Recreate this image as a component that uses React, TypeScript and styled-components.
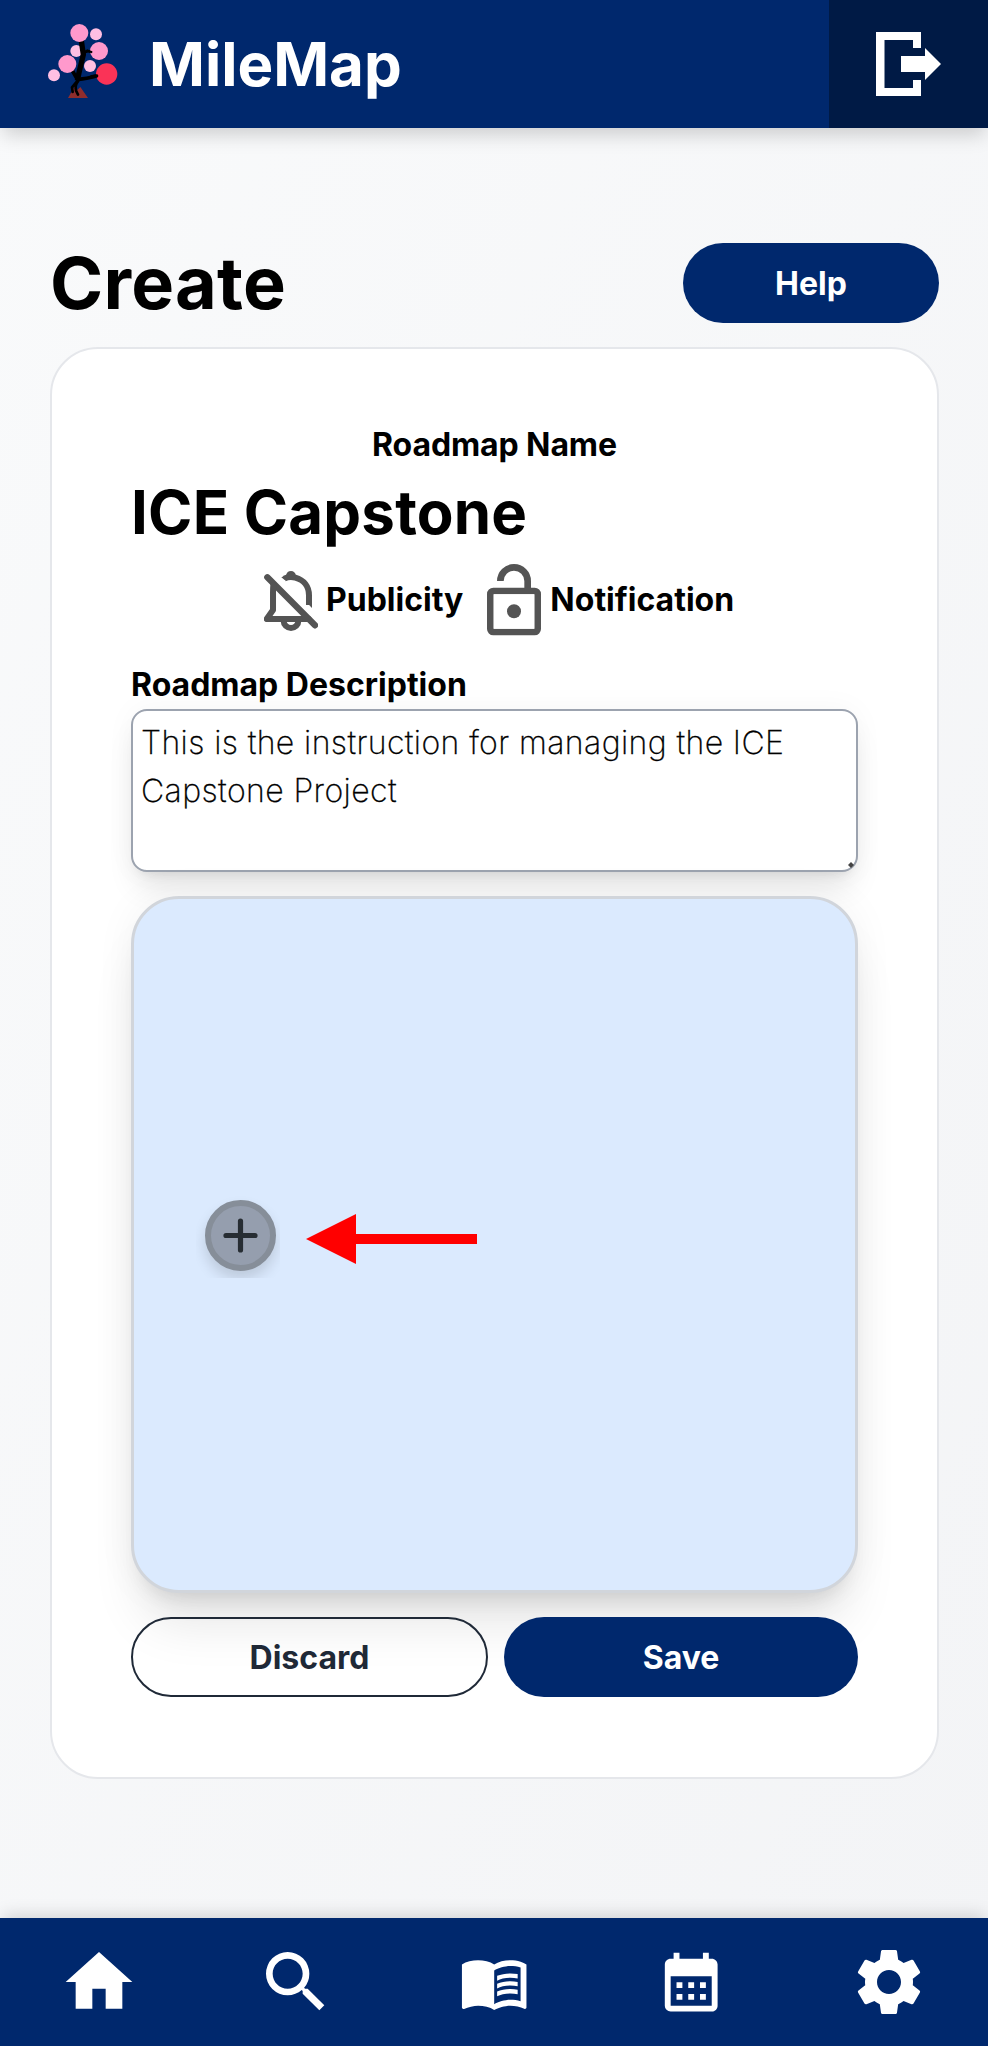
import React from "react";
import styled, { createGlobalStyle } from "styled-components";
import {
  MdHome,
  MdSearch,
  MdMenuBook,
  MdCalendarMonth,
  MdSettings,
} from "react-icons/md";

const navy = "#00286d";

const GlobalStyle = createGlobalStyle`
  *, *::before, *::after { box-sizing: border-box; }
  body { margin: 0; font-family: Inter, "Liberation Sans", sans-serif; color: #000; }
  svg { display: block; flex: none; }
`;

const Page = styled.div`
  display: flex;
  flex-direction: column;
  height: 2046px;
  overflow: hidden;
  background: linear-gradient(to bottom right, #f9fafb, #f3f4f6);
`;

const Header = styled.header`
  display: flex;
  flex: none;
  height: 128px;
  background: ${navy};
  box-shadow: 0 10px 18px -3px rgba(0, 0, 0, 0.17);
`;

const Brand = styled.div`
  display: flex;
  flex: 1;
  align-items: center;
  gap: 31px;
  padding-left: 48px;
  color: #fff;
  font-size: 60px;
  font-weight: 700;
`;

const Logo = styled.svg`
  margin-bottom: 6px;
`;

const LogoutButton = styled.button`
  display: flex;
  align-items: center;
  width: 159px;
  padding: 0 0 0 47px;
  border: 0;
  background: #001a45;
`;

const Main = styled.main`
  display: flex;
  flex: 1;
  flex-direction: column;
  padding: 115px 49px 0 50px;
`;

const TitleRow = styled.div`
  display: flex;
  align-items: center;
  justify-content: space-between;
  height: 80px;
  margin-bottom: 24px;
`;

const Title = styled.h1`
  margin: 0;
  font-size: 72px;
  font-weight: 700;
  line-height: 80px;
  letter-spacing: 0.2px;
`;

const Button = styled.button<{ $outlined?: boolean; $width: number }>`
  width: ${(p) => p.$width}px;
  height: 80px;
  padding: 0;
  border: ${(p) => (p.$outlined ? "2px solid #1f2937" : "0")};
  border-radius: 40px;
  background: ${(p) => (p.$outlined ? "transparent" : navy)};
  color: ${(p) => (p.$outlined ? "#1f2937" : "#fff")};
  font: 700 32px Inter, sans-serif;
`;

const Card = styled.section`
  display: flex;
  flex-direction: column;
  height: 1432px;
  padding: 80px 79px 0;
  border: 2px solid #e5e7eb;
  border-radius: 48px;
  background: #fff;
`;

const Label = styled.span<{ $center?: boolean }>`
  font-size: 32px;
  font-weight: 700;
  letter-spacing: ${(p) => (p.$center ? "-0.1px" : "0")};
  line-height: 32px;
  text-align: ${(p) => (p.$center ? "center" : "left")};
`;

const RoadmapName = styled.h2`
  margin: 15px 0 0;
  font-size: 60px;
  font-weight: 700;
  line-height: 72px;
  letter-spacing: 0.2px;
`;

const Toggles = styled.div`
  display: flex;
  align-items: center;
  height: 72px;
  margin: 16px 0 33px;
  padding-left: 133px;
`;

const Toggle = styled.div<{ $gap: number }>`
  display: flex;
  align-items: center;
  gap: ${(p) => p.$gap}px;
  margin-right: 24px;
`;

const BellIcon = styled.svg`
  margin-top: 2px;
`;

const Description = styled.textarea`
  width: 100%;
  height: 163px;
  padding: 8px;
  border: 2px solid #9ca3af;
  border-radius: 16px;
  outline: none;
  background: #fff;
  color: #000;
  font: 200 32px/48px Inter, sans-serif;
  letter-spacing: 0.4px;
  -webkit-text-stroke: 0.3px #000;
  resize: none;
  box-shadow: 0 20px 30px -6px rgba(0, 0, 0, 0.1), 0 8px 12px -8px rgba(0, 0, 0, 0.1),
    0 0 30px rgba(0, 0, 0, 0.04);
`;

const DescriptionField = styled.div`
  position: relative;
  display: flex;
  margin-top: 8px;
`;

const Grip = styled.svg`
  position: absolute;
  right: 4px;
  bottom: 4px;
`;

const Canvas = styled.div`
  position: relative;
  height: 697px;
  margin: 24px 0;
  border: 3px solid #d1d5db;
  border-radius: 48px;
  background: #dbeafe;
  box-shadow: 0 40px 50px -10px rgba(0, 0, 0, 0.1), 0 16px 20px -12px rgba(0, 0, 0, 0.1),
    0 0 40px rgba(0, 0, 0, 0.05);
`;

const AddNode = styled.div`
  position: absolute;
  left: 62px;
  top: 294px;
  width: 84px;
  height: 85px;
  padding: 7px 0 0 9px;
  overflow: hidden;
`;

const AddCircle = styled.button`
  display: flex;
  align-items: center;
  justify-content: center;
  width: 71px;
  height: 71px;
  padding: 0;
  border: 6px solid #868e99;
  border-radius: 50%;
  background: #959eae;
  box-shadow: 0 8px 14px rgba(0, 0, 0, 0.14);
`;

const Pointer = styled.svg`
  position: absolute;
  left: 172px;
  top: 315px;
`;

const Actions = styled.div`
  position: relative;
  display: flex;
  justify-content: space-between;
`;

const NavBar = styled.nav`
  display: grid;
  grid-template-columns: repeat(5, 1fr);
  flex: none;
  height: 128px;
  background: ${navy};
  box-shadow: 0 -6px 16px -3px rgba(0, 0, 0, 0.15);
`;

const NavItem = styled.a`
  display: flex;
  align-items: center;
  justify-content: center;
  color: #fff;
`;

const TreeLogo = () => (
  <Logo width="70" height="74" viewBox="144 72 210 222">
    <path d="M204 294 226 256 232 270 241 261 264 294Z" fill="#8f2d2d" />
    <circle cx="229" cy="153" r="18" fill="#ffbfe3" />
    <circle cx="270" cy="198" r="18" fill="#ffbfe3" />
    <g stroke="#000" fill="none" strokeLinecap="round" strokeLinejoin="round">
      <path d="M244 122 250 164 237 218 232 242" strokeWidth="16" strokeLinecap="butt" />
      <path d="M250 160Q262 150 273 156" strokeWidth="8" />
      <path d="M232 238 216 210" strokeWidth="11" />
      <path d="M236 238Q258 236 289 228" strokeWidth="11" />
      <path d="M236 238 216 262 218 276M234 244Q224 256 228 272L234 284" strokeWidth="8" />
    </g>
    <circle cx="238" cy="99" r="27" fill="#ff99cc" />
    <circle cx="288" cy="103" r="18" fill="#ffbfe3" />
    <circle cx="297" cy="153" r="27" fill="#ff99cc" />
    <path d="M252 159 262 152 274 156" stroke="#000" strokeWidth="7" fill="none" strokeLinecap="round" />
    <circle cx="202" cy="192" r="27" fill="#ff99cc" />
    <circle cx="162" cy="226" r="18" fill="#ffbfe3" />
    <circle cx="320" cy="222" r="32" fill="#fa3357" />
    <path d="M275 230 290 228" stroke="#000" strokeWidth="10" strokeLinecap="round" />
  </Logo>
);

const ExitIcon = () => (
  <svg width="65" height="64" viewBox="0 0 65 64" fill="#fff">
    <path d="M0 0H45V16H37V8H8.500V56H37V48H45V64H0ZM25 24H49V16L65 32 49 48V40H25Z" />
  </svg>
);

const BellOffIcon = () => (
  <BellIcon width="54" height="60.300" viewBox="462 483 162 181" fill="none" stroke="#545454">
    <path d="M472 502 615 646" strokeWidth="19" strokeLinecap="round" />
    <path d="M490 525Q489 535 489 548V600L470 627H596" strokeWidth="18" strokeLinejoin="round" strokeLinecap="round" />
    <path d="M523 506Q538 498 556 503C582 510 597 530 597 556V585" strokeWidth="18" />
    <path d="M514 502 528 496Q531 483 543 483T558 497L556 510H524Z" fill="#545454" stroke="none" />
    <path d="M588 575 606 594V575Z" fill="#545454" stroke="none" />
    <path d="M521 633A22 21 0 0 0 565 633" strokeWidth="18" />
  </BellIcon>
);

const LockOpenIcon = () => (
  <svg width="54" height="71.300" viewBox="1134 464 162 214" fill="none" stroke="#545454">
    <rect x="1144" y="545" width="142" height="123" rx="9" strokeWidth="20" />
    <path d="M1154 555H1276V658H1154Z" fill="#fff" stroke="none" />
    <path d="M1174 515A41 41 0 0 1 1256 515V540" strokeWidth="20" />
    <circle cx="1215" cy="606" r="21" fill="#545454" stroke="none" />
  </svg>
);

export default function App() {
  return (
    <>
      <GlobalStyle />
      <Page>
        <Header>
          <Brand>
            <TreeLogo />
            <span>MileMap</span>
          </Brand>
          <LogoutButton aria-label="Log out">
            <ExitIcon />
          </LogoutButton>
        </Header>
        <Main>
          <TitleRow>
            <Title>Create</Title>
            <Button $width={256}>Help</Button>
          </TitleRow>
          <Card>
            <Label $center>Roadmap Name</Label>
            <RoadmapName>ICE Capstone</RoadmapName>
            <Toggles>
              <Toggle $gap={8}>
                <BellOffIcon />
                <Label>Publicity</Label>
              </Toggle>
              <Toggle $gap={9}>
                <LockOpenIcon />
                <Label>Notification</Label>
              </Toggle>
            </Toggles>
            <Label>Roadmap Description</Label>
            <DescriptionField>
              <Description
                spellCheck={false}
                defaultValue="This is the instruction for managing the ICE Capstone Project"
              />
              <Grip width="6" height="6" viewBox="0 0 6 6">
                <path d="M3 0 6 3 3 6 0 3Z" fill="#444" />
              </Grip>
            </DescriptionField>
            <Canvas>
              <AddNode>
                <AddCircle aria-label="Add milestone">
                  <svg width="35" height="35" viewBox="0 0 35 35">
                    <path
                      d="M17.500 3V32M3 17.500H32"
                      stroke="#272d33"
                      strokeWidth="5.200"
                      strokeLinecap="round"
                    />
                  </svg>
                </AddCircle>
              </AddNode>
              <Pointer width="171" height="50" viewBox="0 0 171 50">
                <path d="M0 25 50 0V20H171V30H50V50Z" fill="#f00" />
              </Pointer>
            </Canvas>
            <Actions>
              <Button $outlined $width={357}>
                Discard
              </Button>
              <Button $width={354}>Save</Button>
            </Actions>
          </Card>
        </Main>
        <NavBar>
          <NavItem>
            <MdHome size={80} />
          </NavItem>
          <NavItem>
            <MdSearch size={80} />
          </NavItem>
          <NavItem>
            <MdMenuBook size={70.4} />
          </NavItem>
          <NavItem>
            <MdCalendarMonth size={70.4} />
          </NavItem>
          <NavItem>
            <MdSettings size={80} />
          </NavItem>
        </NavBar>
      </Page>
    </>
  );
}
